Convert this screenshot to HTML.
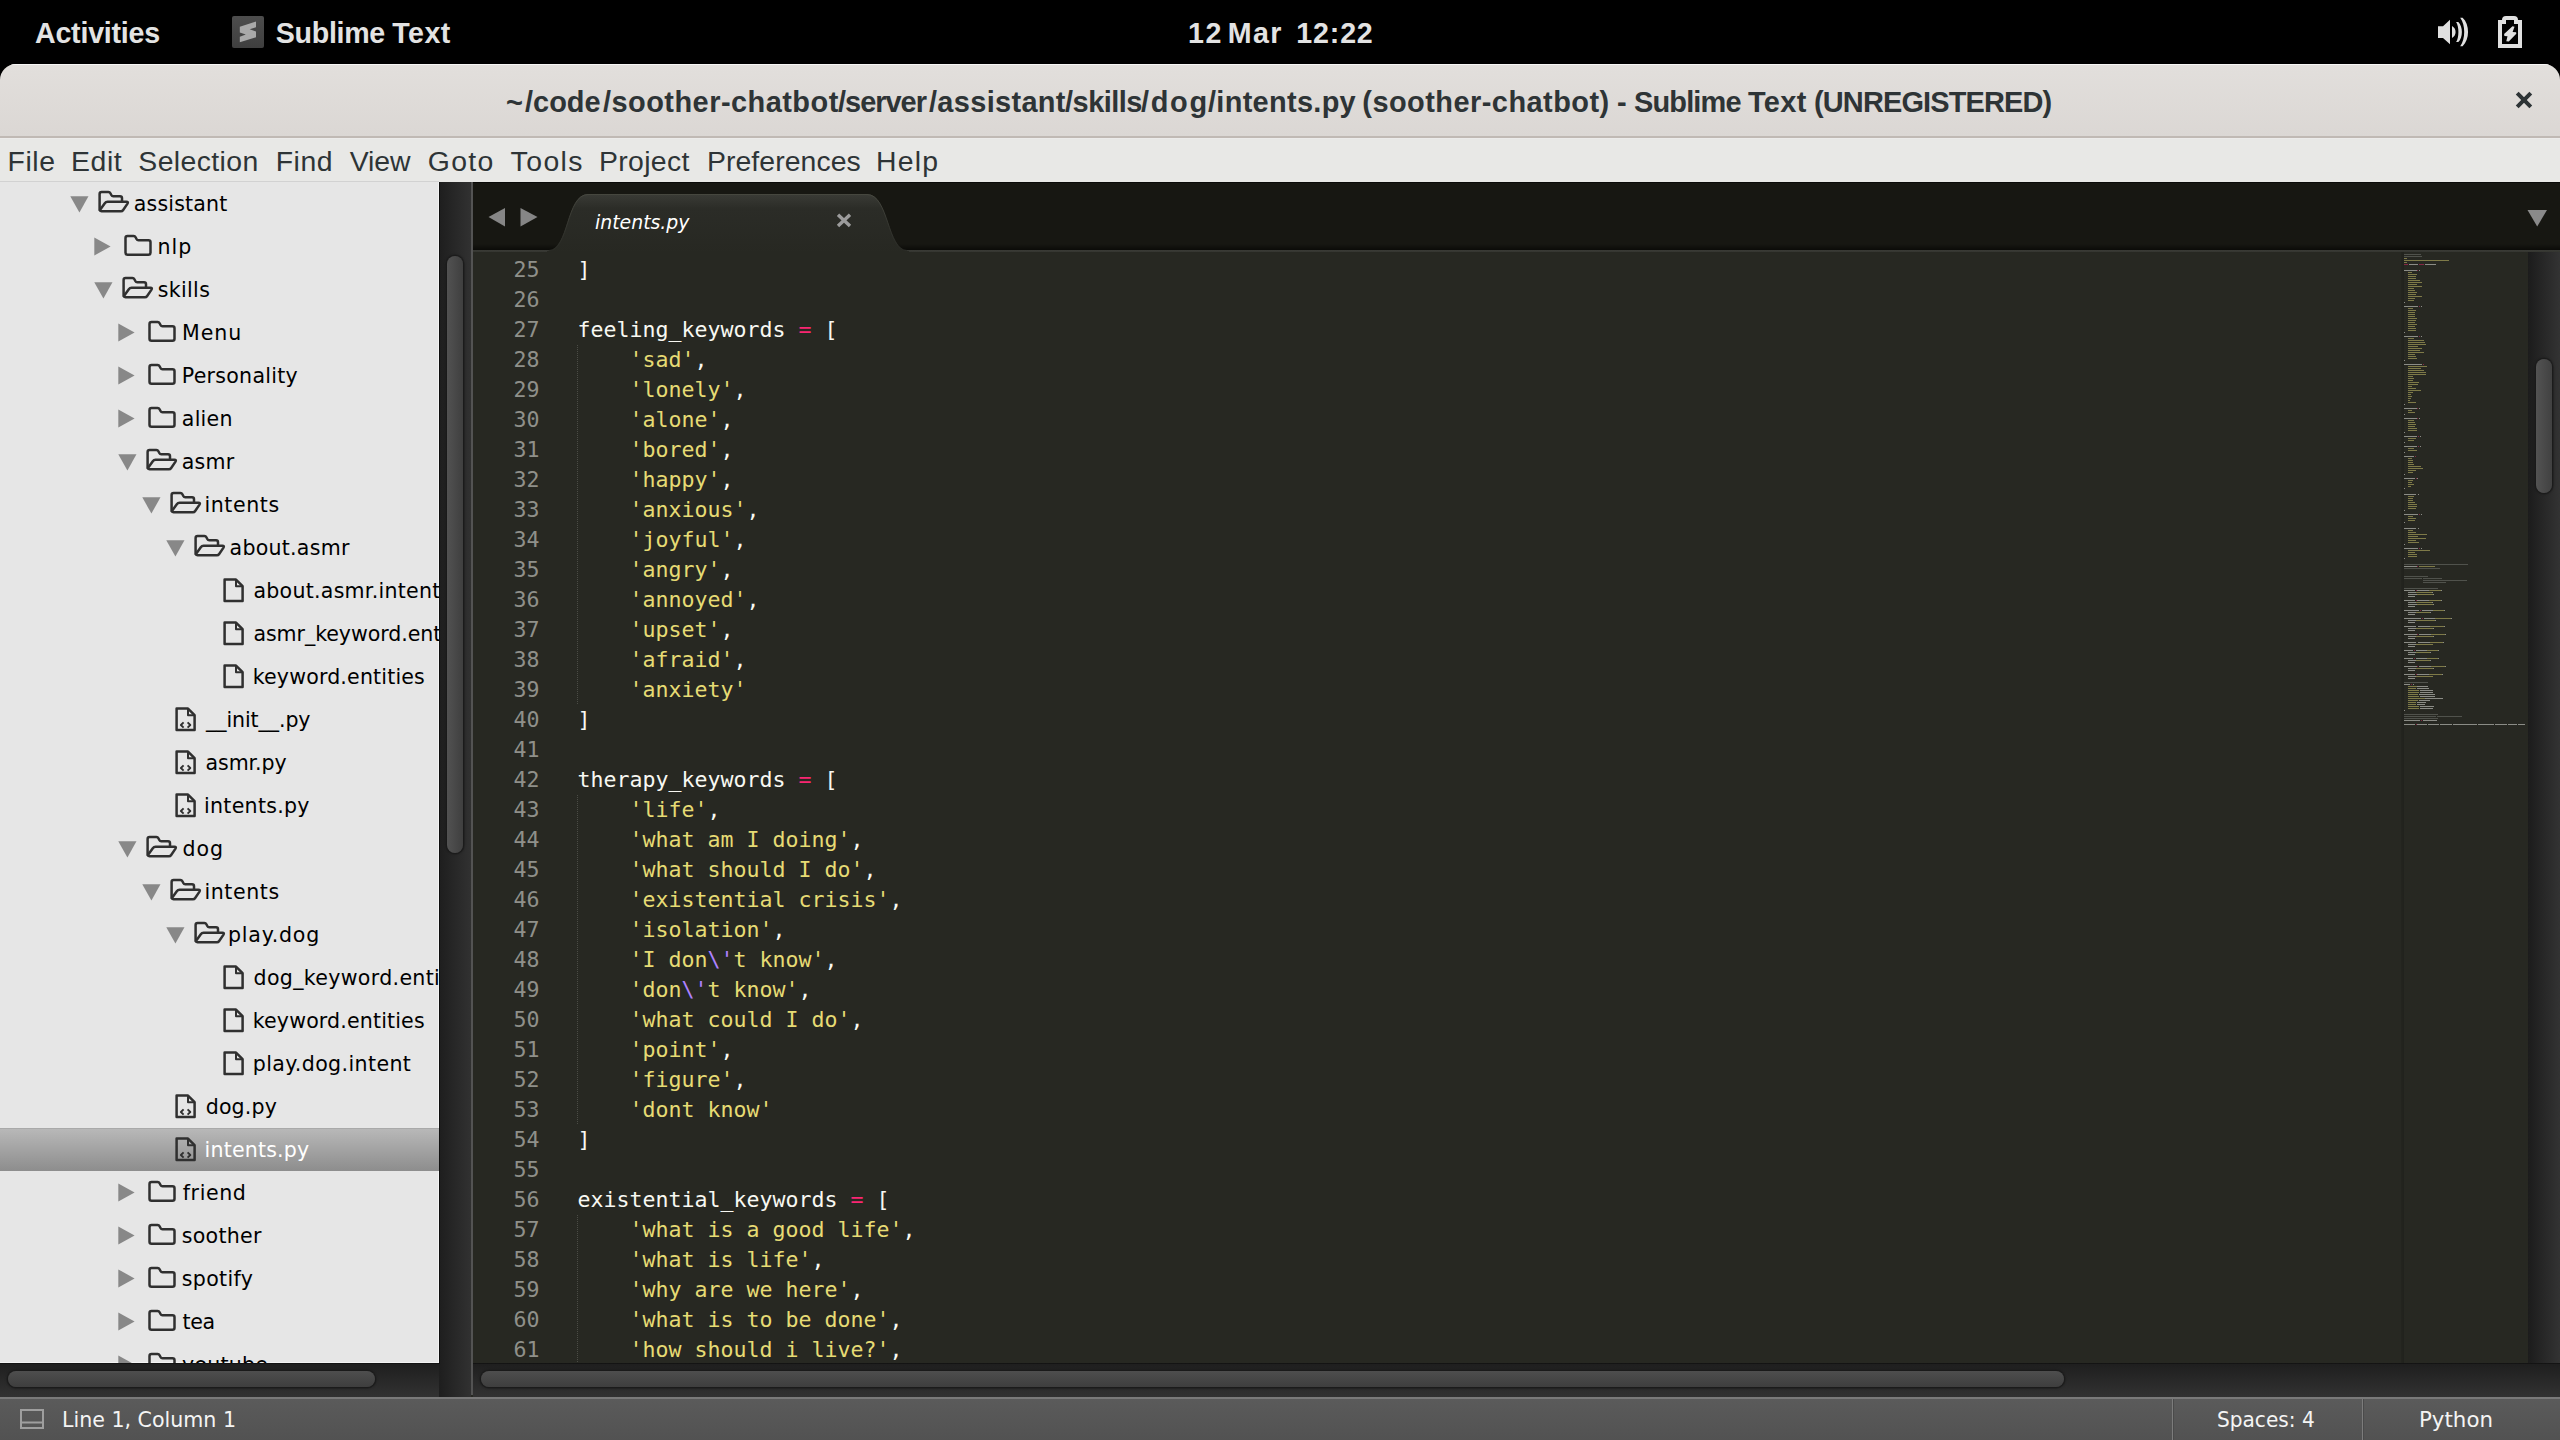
<!DOCTYPE html>
<html lang="en"><head><meta charset="utf-8"><title>intents.py - Sublime Text</title>
<style>
*{margin:0;padding:0;box-sizing:border-box}
html,body{width:2560px;height:1440px;overflow:hidden;background:#000}
body{position:relative;font-family:"Liberation Sans",sans-serif}
.abs{position:absolute}
.t{position:absolute;white-space:pre;line-height:1}
#topbar{position:absolute;left:0;top:0;width:2560px;height:64px;background:#000;color:#e3e3e3;font-weight:bold}
#win{position:absolute;left:0;top:64px;width:2560px;height:1376px;border-radius:16px 16px 0 0;overflow:hidden;background:#272822}
#titlebar{position:absolute;left:0;top:0;width:2560px;height:72px;background:linear-gradient(#e2dfdc,#dbd7d4);box-shadow:inset 0 1px 0 #f7f6f5}
#tbborder{position:absolute;left:0;top:72px;width:2560px;height:2px;background:#c0b9b4}
#menubar{position:absolute;left:0;top:74px;width:2560px;height:44px;background:#e8e8e6;color:#2e3436;box-shadow:inset 0 1px 0 #ecebea}
#menubar .t{font-size:28.4px;top:8.7px}
#sidebar{position:absolute;left:0;top:118px;width:439px;height:1181px;background:#e6e6e6;overflow:hidden;box-shadow:inset -1px -1px 0 #f3f3f3;font-family:"DejaVu Sans",sans-serif;font-size:20.55px;color:#000}
#sbtop{position:absolute;left:0;top:117px;width:439px;height:1px;background:#d2d2d2}
.row{position:absolute;left:0;width:439px;height:43px;line-height:43px;white-space:pre}
.row.sel{background:linear-gradient(#b9b9b9,#8d8d8d);color:#fff;box-shadow:inset 0 1px 0 #a9a9a9}
.row span{position:absolute;top:0.8px}
.row svg{position:absolute}
#vtrack1{position:absolute;left:439px;top:118px;width:32px;height:1215px;background:linear-gradient(90deg,#1e1e1e,#313131)}
#vdark{position:absolute;left:439px;top:118px;width:1px;height:1182px;background:#0f0f0f}
#vsep{position:absolute;left:471px;top:118px;width:2px;height:1213px;background:#535353}
.thumb{position:absolute;border-radius:9px;box-shadow:0 0 1.5px 1.5px #1a1a1a}
#tabbar{position:absolute;left:473px;top:118px;width:2087px;height:68px;background:linear-gradient(#0a0a08 0,#0a0a08 1px,#171712 1.5px,#171712 62px,#0c0c09 67.5px)}
#tabline{position:absolute;left:0;top:68px;width:2087px;height:2.5px;background:linear-gradient(#3a3b36,#31322d)}
#editor{position:absolute;left:473px;top:188px;width:2055px;height:1111px;background:#272822;overflow:hidden}
#code{position:absolute;left:0;top:3px;font-family:"DejaVu Sans Mono",monospace;font-size:21.593px;line-height:30px;color:#f8f8f2;white-space:pre}
.ln{position:absolute;left:0;width:66.5px;text-align:right;color:#8f908a;height:30px}
.cl{position:absolute;left:104.6px;height:30px}
.s{color:#e6db74}.o{color:#f92672}.e{color:#ae81ff}
.guide{position:absolute;left:104px;width:1px;background:repeating-linear-gradient(#4b4c46 0 1px,transparent 1px 2px)}
#vtrack2{position:absolute;left:2528px;top:188px;width:32px;height:1111px;background:linear-gradient(90deg,#1c1c1c,#333)}
.hbar{position:absolute;top:1299px;height:34px;background:linear-gradient(#0e0e0e 0,#1f1f1f 1.5px,#323232)}
#status{position:absolute;left:0;top:1333px;width:2560px;height:43px;background:linear-gradient(#5b5b5b,#525252);box-shadow:inset 0 2px 0 #7a7a7a;font-family:"DejaVu Sans",sans-serif;color:#f4f4f4}
#status .t{font-size:21.9px;top:12px;transform:scaleX(0.94);transform-origin:0 0}
.vs{position:absolute;top:2px;width:2px;height:41px;background:linear-gradient(90deg,#7c7c7c 0 1px,#4a4a4a 1px 2px)}
</style></head><body>

<div id="topbar">
<div class="t" style="left:35.00px;top:18.8px;letter-spacing:-0.222px;font-size:28.6px">Activities</div>
<svg class="abs" style="left:232px;top:16px" width="32" height="32" viewBox="0 0 32 32"><defs><linearGradient id="ig" x1="0" y1="0" x2="0" y2="1"><stop offset="0" stop-color="#4d4d4d"/><stop offset="1" stop-color="#3f3f3f"/></linearGradient></defs><rect width="32" height="32" rx="2" fill="url(#ig)"/><polygon points="24,5.5 7.8,10.7 7.8,16.5 13.8,18.5 7.8,20.7 7.8,26.3 24,21.3 24,15.5 17.7,13.3 24,11.2" fill="#a9a9a9"/></svg>
<div class="t" style="left:275.75px;top:18.8px;letter-spacing:-0.283px;font-size:28.6px">Sublime</div>
<div class="t" style="left:392.15px;top:18.8px;letter-spacing:0.500px;font-size:28.6px">Text</div>
<div class="t" style="left:1187.90px;top:18.8px;letter-spacing:1.800px;font-size:28.6px">12</div>
<div class="t" style="left:1227.75px;top:18.8px;letter-spacing:1.450px;font-size:28.6px">Mar</div>
<div class="t" style="left:1296.35px;top:18.8px;letter-spacing:0.825px;font-size:28.6px">12:22</div>
<svg class="abs" style="left:2432px;top:12px" width="40" height="40" viewBox="0 0 40 40" fill="#e0e0e0"><path d="M6,14.3 H11 L18,7.8 V32.2 L11,26 H6 Z"/><path d="M20,14 C24.8,16.5 24.8,23.5 20,26 Z"/><path d="M24.1,9.9 L26.3,9.9 C31.1,14.5 31.1,25.5 26.3,30 L24.1,30 C27.2,25.5 27.2,14.5 24.1,9.9 Z"/><path d="M28.2,5.8 L30.6,5.8 C37.9,12.5 37.9,27.5 30.6,34.2 L28.2,34.2 C33.6,27 33.6,13 28.2,5.8 Z"/></svg>
<svg class="abs" style="left:2494px;top:12px" width="32" height="40" viewBox="0 0 32 40"><path d="M6,34 V10 H10 V8 Q10,6 12,6 H20 Q22,6 22,8 V10 H26 V34 Z" fill="none" stroke="#e0e0e0" stroke-width="4" stroke-linejoin="miter"/><polygon points="18.5,14.2 20.5,14.8 18.6,19.9 22.1,20.2 22.3,21.8 14.8,29.6 12.3,29.3 13.5,24.3 10.4,24 10.1,22.1" fill="#e0e0e0"/></svg>
</div>
<div id="win">
<div id="titlebar">
<div class="t" style="left:506.00px;top:24.3px;letter-spacing:0.000px;font-size:28.94px;font-weight:bold;color:#2e3436">~</div>
<div class="t" style="left:525.00px;top:24.3px;letter-spacing:0.000px;font-size:28.94px;font-weight:bold;color:#2e3436">/code</div>
<div class="t" style="left:603.00px;top:24.3px;letter-spacing:0.467px;font-size:28.94px;font-weight:bold;color:#2e3436">/soother-chatbot</div>
<div class="t" style="left:838.00px;top:24.3px;letter-spacing:-1.000px;font-size:28.94px;font-weight:bold;color:#2e3436">/server</div>
<div class="t" style="left:929.00px;top:24.3px;letter-spacing:0.333px;font-size:28.94px;font-weight:bold;color:#2e3436">/assistant</div>
<div class="t" style="left:1065.00px;top:24.3px;letter-spacing:-0.500px;font-size:28.94px;font-weight:bold;color:#2e3436">/skills</div>
<div class="t" style="left:1141.00px;top:24.3px;letter-spacing:1.667px;font-size:28.94px;font-weight:bold;color:#2e3436">/dog</div>
<div class="t" style="left:1208.00px;top:24.3px;letter-spacing:0.300px;font-size:28.94px;font-weight:bold;color:#2e3436">/intents.py</div>
<div class="t" style="left:1362.30px;top:24.3px;letter-spacing:0.463px;font-size:28.94px;font-weight:bold;color:#2e3436">(soother-chatbot)</div>
<div class="t" style="left:1617.00px;top:24.3px;letter-spacing:0.000px;font-size:28.94px;font-weight:bold;color:#2e3436">-</div>
<div class="t" style="left:1634.00px;top:24.3px;letter-spacing:-0.833px;font-size:28.94px;font-weight:bold;color:#2e3436">Sublime</div>
<div class="t" style="left:1748.00px;top:24.3px;letter-spacing:0.333px;font-size:28.94px;font-weight:bold;color:#2e3436">Text</div>
<div class="t" style="left:1814.00px;top:24.3px;letter-spacing:-0.846px;font-size:28.94px;font-weight:bold;color:#2e3436">(UNREGISTERED)</div>
<svg class="abs" style="left:2514px;top:26px" width="20" height="20" viewBox="0 0 20 20"><path d="M3.2,3.2 L16.8,16.8 M16.8,3.2 L3.2,16.8" stroke="#2e3436" stroke-width="4" stroke-linecap="butt"/></svg>
</div><div id="tbborder"></div>
<div id="menubar">
<div class="t" style="left:7.40px;top:8.7px;letter-spacing:0.667px;">File</div>
<div class="t" style="left:71.00px;top:8.7px;letter-spacing:0.600px;">Edit</div>
<div class="t" style="left:138.30px;top:8.7px;letter-spacing:0.400px;">Selection</div>
<div class="t" style="left:275.75px;top:8.7px;letter-spacing:0.500px;">Find</div>
<div class="t" style="left:349.65px;top:8.7px;letter-spacing:-0.033px;">View</div>
<div class="t" style="left:427.85px;top:8.7px;letter-spacing:1.300px;">Goto</div>
<div class="t" style="left:510.55px;top:8.7px;letter-spacing:1.425px;">Tools</div>
<div class="t" style="left:599.00px;top:8.7px;letter-spacing:0.333px;">Project</div>
<div class="t" style="left:706.90px;top:8.7px;letter-spacing:0.080px;">Preferences</div>
<div class="t" style="left:876.00px;top:8.7px;letter-spacing:1.200px;">Help</div>
</div>
<div id="sbtop"></div><div id="sidebar">
<div class="row" style="top:0px">
<svg style="left:69.5px;top:13.5px" width="19" height="17" viewBox="0 0 19 17"><polygon points="0.3,0.3 18.5,0.3 9.4,16.6" fill="#888"/></svg>
<svg style="left:98px;top:8px" width="34" height="26" viewBox="0 0 34 26" fill="none" stroke="#303030" stroke-width="2.5" stroke-linejoin="round" stroke-linecap="round"><path d="M1.6,20 V4 Q1.6,2 3.6,2 H10.4 Q11.8,2 12.4,3.2 L13.3,5 Q13.9,6.2 15.3,6.2 H22 Q24,6.2 24,8.2 V11.8"/><path d="M9.6,11.8 H28.4 Q30.6,11.8 29.5,13.6 L25,20.2 Q24.3,21.2 23,21.2 H3.6 Q1.2,21.2 2.5,19.2 L6.8,13.2 Q7.8,11.8 9.6,11.8 Z"/></svg>
<span style="left:133.80px;letter-spacing:0.175px">assistant</span></div>
<div class="row" style="top:43px">
<svg style="left:93.7px;top:12px" width="17" height="19" viewBox="0 0 17 19"><polygon points="0.3,0.4 16.6,9.5 0.3,18.6" fill="#888"/></svg>
<svg style="left:124px;top:9px" width="30" height="24" viewBox="0 0 30 24" fill="none" stroke="#303030" stroke-width="2.5" stroke-linejoin="round"><path d="M1.5,4 Q1.5,2 3.5,2 H9.6 Q11,2 11.6,3.2 L12.5,5 Q13.1,6.2 14.5,6.2 H24.5 Q26.5,6.2 26.5,8.2 V18.8 Q26.5,20.8 24.5,20.8 H3.5 Q1.5,20.8 1.5,18.8 Z"/></svg>
<span style="left:157.50px;letter-spacing:1.000px">nlp</span></div>
<div class="row" style="top:86px">
<svg style="left:93.5px;top:13.5px" width="19" height="17" viewBox="0 0 19 17"><polygon points="0.3,0.3 18.5,0.3 9.4,16.6" fill="#888"/></svg>
<svg style="left:122px;top:8px" width="34" height="26" viewBox="0 0 34 26" fill="none" stroke="#303030" stroke-width="2.5" stroke-linejoin="round" stroke-linecap="round"><path d="M1.6,20 V4 Q1.6,2 3.6,2 H10.4 Q11.8,2 12.4,3.2 L13.3,5 Q13.9,6.2 15.3,6.2 H22 Q24,6.2 24,8.2 V11.8"/><path d="M9.6,11.8 H28.4 Q30.6,11.8 29.5,13.6 L25,20.2 Q24.3,21.2 23,21.2 H3.6 Q1.2,21.2 2.5,19.2 L6.8,13.2 Q7.8,11.8 9.6,11.8 Z"/></svg>
<span style="left:157.80px;letter-spacing:0.320px">skills</span></div>
<div class="row" style="top:129px">
<svg style="left:117.7px;top:12px" width="17" height="19" viewBox="0 0 17 19"><polygon points="0.3,0.4 16.6,9.5 0.3,18.6" fill="#888"/></svg>
<svg style="left:148px;top:9px" width="30" height="24" viewBox="0 0 30 24" fill="none" stroke="#303030" stroke-width="2.5" stroke-linejoin="round"><path d="M1.5,4 Q1.5,2 3.5,2 H9.6 Q11,2 11.6,3.2 L12.5,5 Q13.1,6.2 14.5,6.2 H24.5 Q26.5,6.2 26.5,8.2 V18.8 Q26.5,20.8 24.5,20.8 H3.5 Q1.5,20.8 1.5,18.8 Z"/></svg>
<span style="left:181.95px;letter-spacing:1.000px">Menu</span></div>
<div class="row" style="top:172px">
<svg style="left:117.7px;top:12px" width="17" height="19" viewBox="0 0 17 19"><polygon points="0.3,0.4 16.6,9.5 0.3,18.6" fill="#888"/></svg>
<svg style="left:148px;top:9px" width="30" height="24" viewBox="0 0 30 24" fill="none" stroke="#303030" stroke-width="2.5" stroke-linejoin="round"><path d="M1.5,4 Q1.5,2 3.5,2 H9.6 Q11,2 11.6,3.2 L12.5,5 Q13.1,6.2 14.5,6.2 H24.5 Q26.5,6.2 26.5,8.2 V18.8 Q26.5,20.8 24.5,20.8 H3.5 Q1.5,20.8 1.5,18.8 Z"/></svg>
<span style="left:181.75px;letter-spacing:0.270px">Personality</span></div>
<div class="row" style="top:215px">
<svg style="left:117.7px;top:12px" width="17" height="19" viewBox="0 0 17 19"><polygon points="0.3,0.4 16.6,9.5 0.3,18.6" fill="#888"/></svg>
<svg style="left:148px;top:9px" width="30" height="24" viewBox="0 0 30 24" fill="none" stroke="#303030" stroke-width="2.5" stroke-linejoin="round"><path d="M1.5,4 Q1.5,2 3.5,2 H9.6 Q11,2 11.6,3.2 L12.5,5 Q13.1,6.2 14.5,6.2 H24.5 Q26.5,6.2 26.5,8.2 V18.8 Q26.5,20.8 24.5,20.8 H3.5 Q1.5,20.8 1.5,18.8 Z"/></svg>
<span style="left:181.80px;letter-spacing:0.250px">alien</span></div>
<div class="row" style="top:258px">
<svg style="left:117.5px;top:13.5px" width="19" height="17" viewBox="0 0 19 17"><polygon points="0.3,0.3 18.5,0.3 9.4,16.6" fill="#888"/></svg>
<svg style="left:146px;top:8px" width="34" height="26" viewBox="0 0 34 26" fill="none" stroke="#303030" stroke-width="2.5" stroke-linejoin="round" stroke-linecap="round"><path d="M1.6,20 V4 Q1.6,2 3.6,2 H10.4 Q11.8,2 12.4,3.2 L13.3,5 Q13.9,6.2 15.3,6.2 H22 Q24,6.2 24,8.2 V11.8"/><path d="M9.6,11.8 H28.4 Q30.6,11.8 29.5,13.6 L25,20.2 Q24.3,21.2 23,21.2 H3.6 Q1.2,21.2 2.5,19.2 L6.8,13.2 Q7.8,11.8 9.6,11.8 Z"/></svg>
<span style="left:181.70px;letter-spacing:0.267px">asmr</span></div>
<div class="row" style="top:301px">
<svg style="left:141.5px;top:13.5px" width="19" height="17" viewBox="0 0 19 17"><polygon points="0.3,0.3 18.5,0.3 9.4,16.6" fill="#888"/></svg>
<svg style="left:170px;top:8px" width="34" height="26" viewBox="0 0 34 26" fill="none" stroke="#303030" stroke-width="2.5" stroke-linejoin="round" stroke-linecap="round"><path d="M1.6,20 V4 Q1.6,2 3.6,2 H10.4 Q11.8,2 12.4,3.2 L13.3,5 Q13.9,6.2 15.3,6.2 H22 Q24,6.2 24,8.2 V11.8"/><path d="M9.6,11.8 H28.4 Q30.6,11.8 29.5,13.6 L25,20.2 Q24.3,21.2 23,21.2 H3.6 Q1.2,21.2 2.5,19.2 L6.8,13.2 Q7.8,11.8 9.6,11.8 Z"/></svg>
<span style="left:204.45px;letter-spacing:0.583px">intents</span></div>
<div class="row" style="top:344px">
<svg style="left:165.5px;top:13.5px" width="19" height="17" viewBox="0 0 19 17"><polygon points="0.3,0.3 18.5,0.3 9.4,16.6" fill="#888"/></svg>
<svg style="left:194px;top:8px" width="34" height="26" viewBox="0 0 34 26" fill="none" stroke="#303030" stroke-width="2.5" stroke-linejoin="round" stroke-linecap="round"><path d="M1.6,20 V4 Q1.6,2 3.6,2 H10.4 Q11.8,2 12.4,3.2 L13.3,5 Q13.9,6.2 15.3,6.2 H22 Q24,6.2 24,8.2 V11.8"/><path d="M9.6,11.8 H28.4 Q30.6,11.8 29.5,13.6 L25,20.2 Q24.3,21.2 23,21.2 H3.6 Q1.2,21.2 2.5,19.2 L6.8,13.2 Q7.8,11.8 9.6,11.8 Z"/></svg>
<span style="left:229.60px;letter-spacing:0.244px">about.asmr</span></div>
<div class="row" style="top:387px">
<svg style="left:223.0px;top:9px" width="24" height="26" viewBox="0 0 24 26" fill="none" stroke="#303030" stroke-width="2.5" stroke-linejoin="round"><path d="M1.6,1.6 H13 L19.6,8.2 V23 H1.6 Z"/><path d="M13,1.6 V8.2 H19.6" stroke-width="2"/></svg>
<span style="left:253.45px;letter-spacing:0.256px">about.asmr.intent</span></div>
<div class="row" style="top:430px">
<svg style="left:223.0px;top:9px" width="24" height="26" viewBox="0 0 24 26" fill="none" stroke="#303030" stroke-width="2.5" stroke-linejoin="round"><path d="M1.6,1.6 H13 L19.6,8.2 V23 H1.6 Z"/><path d="M13,1.6 V8.2 H19.6" stroke-width="2"/></svg>
<span style="left:253.45px;letter-spacing:-0.060px">asmr_keyword.entities</span></div>
<div class="row" style="top:473px">
<svg style="left:223.0px;top:9px" width="24" height="26" viewBox="0 0 24 26" fill="none" stroke="#303030" stroke-width="2.5" stroke-linejoin="round"><path d="M1.6,1.6 H13 L19.6,8.2 V23 H1.6 Z"/><path d="M13,1.6 V8.2 H19.6" stroke-width="2"/></svg>
<span style="left:252.70px;letter-spacing:0.173px">keyword.entities</span></div>
<div class="row" style="top:516px">
<svg style="left:175.0px;top:9px" width="24" height="26" viewBox="0 0 24 26" fill="none" stroke="#303030" stroke-width="2.5" stroke-linejoin="round"><path d="M1.6,1.6 H13 L19.6,8.2 V23 H1.6 Z"/><path d="M13,1.6 V8.2 H19.6" stroke-width="2"/><path d="M8.6,15.4 L5.9,18 L8.6,20.6 M12.6,15.4 L15.3,18 L12.6,20.6" stroke-width="1.9"/></svg>
<span style="left:206.00px;letter-spacing:-0.080px">__init__.py</span></div>
<div class="row" style="top:559px">
<svg style="left:175.0px;top:9px" width="24" height="26" viewBox="0 0 24 26" fill="none" stroke="#303030" stroke-width="2.5" stroke-linejoin="round"><path d="M1.6,1.6 H13 L19.6,8.2 V23 H1.6 Z"/><path d="M13,1.6 V8.2 H19.6" stroke-width="2"/><path d="M8.6,15.4 L5.9,18 L8.6,20.6 M12.6,15.4 L15.3,18 L12.6,20.6" stroke-width="1.9"/></svg>
<span style="left:205.60px;letter-spacing:-0.100px">asmr.py</span></div>
<div class="row" style="top:602px">
<svg style="left:175.0px;top:9px" width="24" height="26" viewBox="0 0 24 26" fill="none" stroke="#303030" stroke-width="2.5" stroke-linejoin="round"><path d="M1.6,1.6 H13 L19.6,8.2 V23 H1.6 Z"/><path d="M13,1.6 V8.2 H19.6" stroke-width="2"/><path d="M8.6,15.4 L5.9,18 L8.6,20.6 M12.6,15.4 L15.3,18 L12.6,20.6" stroke-width="1.9"/></svg>
<span style="left:204.10px;letter-spacing:0.267px">intents.py</span></div>
<div class="row" style="top:645px">
<svg style="left:117.5px;top:13.5px" width="19" height="17" viewBox="0 0 19 17"><polygon points="0.3,0.3 18.5,0.3 9.4,16.6" fill="#888"/></svg>
<svg style="left:146px;top:8px" width="34" height="26" viewBox="0 0 34 26" fill="none" stroke="#303030" stroke-width="2.5" stroke-linejoin="round" stroke-linecap="round"><path d="M1.6,20 V4 Q1.6,2 3.6,2 H10.4 Q11.8,2 12.4,3.2 L13.3,5 Q13.9,6.2 15.3,6.2 H22 Q24,6.2 24,8.2 V11.8"/><path d="M9.6,11.8 H28.4 Q30.6,11.8 29.5,13.6 L25,20.2 Q24.3,21.2 23,21.2 H3.6 Q1.2,21.2 2.5,19.2 L6.8,13.2 Q7.8,11.8 9.6,11.8 Z"/></svg>
<span style="left:182.45px;letter-spacing:1.000px">dog</span></div>
<div class="row" style="top:688px">
<svg style="left:141.5px;top:13.5px" width="19" height="17" viewBox="0 0 19 17"><polygon points="0.3,0.3 18.5,0.3 9.4,16.6" fill="#888"/></svg>
<svg style="left:170px;top:8px" width="34" height="26" viewBox="0 0 34 26" fill="none" stroke="#303030" stroke-width="2.5" stroke-linejoin="round" stroke-linecap="round"><path d="M1.6,20 V4 Q1.6,2 3.6,2 H10.4 Q11.8,2 12.4,3.2 L13.3,5 Q13.9,6.2 15.3,6.2 H22 Q24,6.2 24,8.2 V11.8"/><path d="M9.6,11.8 H28.4 Q30.6,11.8 29.5,13.6 L25,20.2 Q24.3,21.2 23,21.2 H3.6 Q1.2,21.2 2.5,19.2 L6.8,13.2 Q7.8,11.8 9.6,11.8 Z"/></svg>
<span style="left:204.40px;letter-spacing:0.600px">intents</span></div>
<div class="row" style="top:731px">
<svg style="left:165.5px;top:13.5px" width="19" height="17" viewBox="0 0 19 17"><polygon points="0.3,0.3 18.5,0.3 9.4,16.6" fill="#888"/></svg>
<svg style="left:194px;top:8px" width="34" height="26" viewBox="0 0 34 26" fill="none" stroke="#303030" stroke-width="2.5" stroke-linejoin="round" stroke-linecap="round"><path d="M1.6,20 V4 Q1.6,2 3.6,2 H10.4 Q11.8,2 12.4,3.2 L13.3,5 Q13.9,6.2 15.3,6.2 H22 Q24,6.2 24,8.2 V11.8"/><path d="M9.6,11.8 H28.4 Q30.6,11.8 29.5,13.6 L25,20.2 Q24.3,21.2 23,21.2 H3.6 Q1.2,21.2 2.5,19.2 L6.8,13.2 Q7.8,11.8 9.6,11.8 Z"/></svg>
<span style="left:227.95px;letter-spacing:0.786px">play.dog</span></div>
<div class="row" style="top:774px">
<svg style="left:223.0px;top:9px" width="24" height="26" viewBox="0 0 24 26" fill="none" stroke="#303030" stroke-width="2.5" stroke-linejoin="round"><path d="M1.6,1.6 H13 L19.6,8.2 V23 H1.6 Z"/><path d="M13,1.6 V8.2 H19.6" stroke-width="2"/></svg>
<span style="left:253.55px;letter-spacing:0.327px">dog_keyword.entities</span></div>
<div class="row" style="top:817px">
<svg style="left:223.0px;top:9px" width="24" height="26" viewBox="0 0 24 26" fill="none" stroke="#303030" stroke-width="2.5" stroke-linejoin="round"><path d="M1.6,1.6 H13 L19.6,8.2 V23 H1.6 Z"/><path d="M13,1.6 V8.2 H19.6" stroke-width="2"/></svg>
<span style="left:252.75px;letter-spacing:0.153px">keyword.entities</span></div>
<div class="row" style="top:860px">
<svg style="left:223.0px;top:9px" width="24" height="26" viewBox="0 0 24 26" fill="none" stroke="#303030" stroke-width="2.5" stroke-linejoin="round"><path d="M1.6,1.6 H13 L19.6,8.2 V23 H1.6 Z"/><path d="M13,1.6 V8.2 H19.6" stroke-width="2"/></svg>
<span style="left:252.75px;letter-spacing:0.379px">play.dog.intent</span></div>
<div class="row" style="top:903px">
<svg style="left:175.0px;top:9px" width="24" height="26" viewBox="0 0 24 26" fill="none" stroke="#303030" stroke-width="2.5" stroke-linejoin="round"><path d="M1.6,1.6 H13 L19.6,8.2 V23 H1.6 Z"/><path d="M13,1.6 V8.2 H19.6" stroke-width="2"/><path d="M8.6,15.4 L5.9,18 L8.6,20.6 M12.6,15.4 L15.3,18 L12.6,20.6" stroke-width="1.9"/></svg>
<span style="left:205.70px;letter-spacing:0.160px">dog.py</span></div>
<div class="row sel" style="top:946px">
<svg style="left:175.0px;top:9px" width="24" height="26" viewBox="0 0 24 26" fill="none" stroke="#303030" stroke-width="2.5" stroke-linejoin="round"><path d="M1.6,1.6 H13 L19.6,8.2 V23 H1.6 Z"/><path d="M13,1.6 V8.2 H19.6" stroke-width="2"/><path d="M8.6,15.4 L5.9,18 L8.6,20.6 M12.6,15.4 L15.3,18 L12.6,20.6" stroke-width="1.9"/></svg>
<span style="left:204.60px;letter-spacing:0.178px">intents.py</span></div>
<div class="row" style="top:989px">
<svg style="left:117.7px;top:12px" width="17" height="19" viewBox="0 0 17 19"><polygon points="0.3,0.4 16.6,9.5 0.3,18.6" fill="#888"/></svg>
<svg style="left:148px;top:9px" width="30" height="24" viewBox="0 0 30 24" fill="none" stroke="#303030" stroke-width="2.5" stroke-linejoin="round"><path d="M1.5,4 Q1.5,2 3.5,2 H9.6 Q11,2 11.6,3.2 L12.5,5 Q13.1,6.2 14.5,6.2 H24.5 Q26.5,6.2 26.5,8.2 V18.8 Q26.5,20.8 24.5,20.8 H3.5 Q1.5,20.8 1.5,18.8 Z"/></svg>
<span style="left:182.78px;letter-spacing:0.590px">friend</span></div>
<div class="row" style="top:1032px">
<svg style="left:117.7px;top:12px" width="17" height="19" viewBox="0 0 17 19"><polygon points="0.3,0.4 16.6,9.5 0.3,18.6" fill="#888"/></svg>
<svg style="left:148px;top:9px" width="30" height="24" viewBox="0 0 30 24" fill="none" stroke="#303030" stroke-width="2.5" stroke-linejoin="round"><path d="M1.5,4 Q1.5,2 3.5,2 H9.6 Q11,2 11.6,3.2 L12.5,5 Q13.1,6.2 14.5,6.2 H24.5 Q26.5,6.2 26.5,8.2 V18.8 Q26.5,20.8 24.5,20.8 H3.5 Q1.5,20.8 1.5,18.8 Z"/></svg>
<span style="left:181.70px;letter-spacing:0.300px">soother</span></div>
<div class="row" style="top:1075px">
<svg style="left:117.7px;top:12px" width="17" height="19" viewBox="0 0 17 19"><polygon points="0.3,0.4 16.6,9.5 0.3,18.6" fill="#888"/></svg>
<svg style="left:148px;top:9px" width="30" height="24" viewBox="0 0 30 24" fill="none" stroke="#303030" stroke-width="2.5" stroke-linejoin="round"><path d="M1.5,4 Q1.5,2 3.5,2 H9.6 Q11,2 11.6,3.2 L12.5,5 Q13.1,6.2 14.5,6.2 H24.5 Q26.5,6.2 26.5,8.2 V18.8 Q26.5,20.8 24.5,20.8 H3.5 Q1.5,20.8 1.5,18.8 Z"/></svg>
<span style="left:181.78px;letter-spacing:0.325px">spotify</span></div>
<div class="row" style="top:1118px">
<svg style="left:117.7px;top:12px" width="17" height="19" viewBox="0 0 17 19"><polygon points="0.3,0.4 16.6,9.5 0.3,18.6" fill="#888"/></svg>
<svg style="left:148px;top:9px" width="30" height="24" viewBox="0 0 30 24" fill="none" stroke="#303030" stroke-width="2.5" stroke-linejoin="round"><path d="M1.5,4 Q1.5,2 3.5,2 H9.6 Q11,2 11.6,3.2 L12.5,5 Q13.1,6.2 14.5,6.2 H24.5 Q26.5,6.2 26.5,8.2 V18.8 Q26.5,20.8 24.5,20.8 H3.5 Q1.5,20.8 1.5,18.8 Z"/></svg>
<span style="left:182.50px;letter-spacing:-0.300px">tea</span></div>
<div class="row" style="top:1161px">
<svg style="left:117.7px;top:12px" width="17" height="19" viewBox="0 0 17 19"><polygon points="0.3,0.4 16.6,9.5 0.3,18.6" fill="#888"/></svg>
<svg style="left:148px;top:9px" width="30" height="24" viewBox="0 0 30 24" fill="none" stroke="#303030" stroke-width="2.5" stroke-linejoin="round"><path d="M1.5,4 Q1.5,2 3.5,2 H9.6 Q11,2 11.6,3.2 L12.5,5 Q13.1,6.2 14.5,6.2 H24.5 Q26.5,6.2 26.5,8.2 V18.8 Q26.5,20.8 24.5,20.8 H3.5 Q1.5,20.8 1.5,18.8 Z"/></svg>
<span style="left:182.00px;letter-spacing:0.233px">youtube</span></div>
</div>
<div id="vtrack1"><div class="thumb" style="left:7.8px;top:74px;width:16px;height:597px;background:linear-gradient(90deg,#525252,#3f3f3f)"></div></div><div id="vdark"></div><div id="vsep"></div>
<div id="tabbar"><div id="tabline"></div>
<svg class="abs" style="left:0;top:0" width="2087" height="72" viewBox="473 182 2087 72"><defs><linearGradient id="tg" x1="0" y1="0" x2="0" y2="1"><stop offset="0" stop-color="#3a3b36"/><stop offset="0.25" stop-color="#2b2c27"/><stop offset="1" stop-color="#272822"/></linearGradient></defs><linearGradient id="ts" gradientUnits="userSpaceOnUse" x1="0" y1="194" x2="0" y2="251"><stop offset="0" stop-color="#46473f"/><stop offset="0.6" stop-color="#34352f"/><stop offset="1" stop-color="#2a2b26"/></linearGradient><polygon points="488.5,217 505,208 505,226.5" fill="#868686"/><polygon points="520.5,208 537.5,217 520.5,226.5" fill="#868686"/><path d="M547,251 C569,251 566,194 588,194 H867 C889,194 887,251 909,251 V253 H547 Z" fill="url(#tg)"/><path d="M549,250.5 C569,250.5 566,194.5 588,194.5 H867 C889,194.5 887,250.5 907,250.5" fill="none" stroke="url(#ts)" stroke-width="1"/><path d="M838,214.8 L850,226 M850,214.8 L838,226" stroke="#9c9c9c" stroke-width="3.4"/><polygon points="2527.5,210 2547,210 2537.2,226.5" fill="#8a8a8a"/></svg>
<div class="t" style="left:121.5px;top:30px;font-family:'DejaVu Sans',sans-serif;font-style:italic;font-size:20.3px;color:#fff;transform:scaleX(0.93);transform-origin:0 0">intents.py</div>
</div>
<div id="editor"><div id="code">
<div class="ln" style="top:0px">25</div>
<div class="cl" style="top:0px">]</div>
<div class="ln" style="top:30px">26</div>
<div class="ln" style="top:60px">27</div>
<div class="cl" style="top:60px">feeling_keywords <span class="o">=</span> [</div>
<div class="ln" style="top:90px">28</div>
<div class="cl" style="top:90px">    <span class="s">&#x27;sad&#x27;</span>,</div>
<div class="ln" style="top:120px">29</div>
<div class="cl" style="top:120px">    <span class="s">&#x27;lonely&#x27;</span>,</div>
<div class="ln" style="top:150px">30</div>
<div class="cl" style="top:150px">    <span class="s">&#x27;alone&#x27;</span>,</div>
<div class="ln" style="top:180px">31</div>
<div class="cl" style="top:180px">    <span class="s">&#x27;bored&#x27;</span>,</div>
<div class="ln" style="top:210px">32</div>
<div class="cl" style="top:210px">    <span class="s">&#x27;happy&#x27;</span>,</div>
<div class="ln" style="top:240px">33</div>
<div class="cl" style="top:240px">    <span class="s">&#x27;anxious&#x27;</span>,</div>
<div class="ln" style="top:270px">34</div>
<div class="cl" style="top:270px">    <span class="s">&#x27;joyful&#x27;</span>,</div>
<div class="ln" style="top:300px">35</div>
<div class="cl" style="top:300px">    <span class="s">&#x27;angry&#x27;</span>,</div>
<div class="ln" style="top:330px">36</div>
<div class="cl" style="top:330px">    <span class="s">&#x27;annoyed&#x27;</span>,</div>
<div class="ln" style="top:360px">37</div>
<div class="cl" style="top:360px">    <span class="s">&#x27;upset&#x27;</span>,</div>
<div class="ln" style="top:390px">38</div>
<div class="cl" style="top:390px">    <span class="s">&#x27;afraid&#x27;</span>,</div>
<div class="ln" style="top:420px">39</div>
<div class="cl" style="top:420px">    <span class="s">&#x27;anxiety&#x27;</span></div>
<div class="ln" style="top:450px">40</div>
<div class="cl" style="top:450px">]</div>
<div class="ln" style="top:480px">41</div>
<div class="ln" style="top:510px">42</div>
<div class="cl" style="top:510px">therapy_keywords <span class="o">=</span> [</div>
<div class="ln" style="top:540px">43</div>
<div class="cl" style="top:540px">    <span class="s">&#x27;life&#x27;</span>,</div>
<div class="ln" style="top:570px">44</div>
<div class="cl" style="top:570px">    <span class="s">&#x27;what am I doing&#x27;</span>,</div>
<div class="ln" style="top:600px">45</div>
<div class="cl" style="top:600px">    <span class="s">&#x27;what should I do&#x27;</span>,</div>
<div class="ln" style="top:630px">46</div>
<div class="cl" style="top:630px">    <span class="s">&#x27;existential crisis&#x27;</span>,</div>
<div class="ln" style="top:660px">47</div>
<div class="cl" style="top:660px">    <span class="s">&#x27;isolation&#x27;</span>,</div>
<div class="ln" style="top:690px">48</div>
<div class="cl" style="top:690px">    <span class="s">&#x27;I don<span class="e">\&#x27;</span>t know&#x27;</span>,</div>
<div class="ln" style="top:720px">49</div>
<div class="cl" style="top:720px">    <span class="s">&#x27;don<span class="e">\&#x27;</span>t know&#x27;</span>,</div>
<div class="ln" style="top:750px">50</div>
<div class="cl" style="top:750px">    <span class="s">&#x27;what could I do&#x27;</span>,</div>
<div class="ln" style="top:780px">51</div>
<div class="cl" style="top:780px">    <span class="s">&#x27;point&#x27;</span>,</div>
<div class="ln" style="top:810px">52</div>
<div class="cl" style="top:810px">    <span class="s">&#x27;figure&#x27;</span>,</div>
<div class="ln" style="top:840px">53</div>
<div class="cl" style="top:840px">    <span class="s">&#x27;dont know&#x27;</span></div>
<div class="ln" style="top:870px">54</div>
<div class="cl" style="top:870px">]</div>
<div class="ln" style="top:900px">55</div>
<div class="ln" style="top:930px">56</div>
<div class="cl" style="top:930px">existential_keywords <span class="o">=</span> [</div>
<div class="ln" style="top:960px">57</div>
<div class="cl" style="top:960px">    <span class="s">&#x27;what is a good life&#x27;</span>,</div>
<div class="ln" style="top:990px">58</div>
<div class="cl" style="top:990px">    <span class="s">&#x27;what is life&#x27;</span>,</div>
<div class="ln" style="top:1020px">59</div>
<div class="cl" style="top:1020px">    <span class="s">&#x27;why are we here&#x27;</span>,</div>
<div class="ln" style="top:1050px">60</div>
<div class="cl" style="top:1050px">    <span class="s">&#x27;what is to be done&#x27;</span>,</div>
<div class="ln" style="top:1080px">61</div>
<div class="cl" style="top:1080px">    <span class="s">&#x27;how should i live?&#x27;</span>,</div>
<div class="guide" style="top:90px;height:360px"></div>
<div class="guide" style="top:540px;height:330px"></div>
<div class="guide" style="top:960px;height:150px"></div>
</div>
<div class="abs" style="left:1928px;top:0;width:3px;height:1111px;background:linear-gradient(90deg,rgba(0,0,0,0.10),rgba(0,0,0,0.16))"></div>
<svg class="abs" style="left:1931px;top:2px" width="125" height="480" viewBox="0 0 125 480" shape-rendering="crispEdges">
<rect x="0.0" y="0" width="16.9" height="1.4" fill="#6b6c66" opacity="0.62"/>
<rect x="0.0" y="2" width="17.8" height="1.4" fill="#6b6c66" opacity="0.62"/>
<rect x="0.0" y="4" width="2.7" height="1.4" fill="#b5ad5f" opacity="0.62"/>
<rect x="0.0" y="6" width="44.5" height="1.4" fill="#b5ad5f" opacity="0.62"/>
<rect x="0.0" y="8" width="2.7" height="1.4" fill="#b5ad5f" opacity="0.62"/>
<rect x="0.0" y="10" width="3.6" height="1.4" fill="#c2265a" opacity="0.62"/>
<rect x="4.5" y="10" width="9.8" height="1.4" fill="#c9c9c3" opacity="0.62"/>
<rect x="15.1" y="10" width="5.3" height="1.4" fill="#c2265a" opacity="0.62"/>
<rect x="21.4" y="10" width="10.7" height="1.4" fill="#c9c9c3" opacity="0.62"/>
<rect x="0.0" y="16" width="12.5" height="1.4" fill="#c9c9c3" opacity="0.62"/>
<rect x="13.3" y="16" width="0.9" height="1.4" fill="#c2265a" opacity="0.62"/>
<rect x="15.1" y="16" width="0.9" height="1.4" fill="#c9c9c3" opacity="0.62"/>
<rect x="3.6" y="18" width="4.5" height="1.4" fill="#b5ad5f" opacity="0.62"/>
<rect x="3.6" y="20" width="8.9" height="1.4" fill="#b5ad5f" opacity="0.62"/>
<rect x="3.6" y="22" width="8.0" height="1.4" fill="#b5ad5f" opacity="0.62"/>
<rect x="3.6" y="24" width="8.0" height="1.4" fill="#b5ad5f" opacity="0.62"/>
<rect x="3.6" y="26" width="12.5" height="1.4" fill="#b5ad5f" opacity="0.62"/>
<rect x="3.6" y="28" width="14.2" height="1.4" fill="#b5ad5f" opacity="0.62"/>
<rect x="3.6" y="30" width="8.9" height="1.4" fill="#b5ad5f" opacity="0.62"/>
<rect x="3.6" y="32" width="14.2" height="1.4" fill="#b5ad5f" opacity="0.62"/>
<rect x="3.6" y="34" width="6.2" height="1.4" fill="#b5ad5f" opacity="0.62"/>
<rect x="3.6" y="36" width="7.1" height="1.4" fill="#b5ad5f" opacity="0.62"/>
<rect x="3.6" y="38" width="8.9" height="1.4" fill="#b5ad5f" opacity="0.62"/>
<rect x="3.6" y="40" width="8.0" height="1.4" fill="#b5ad5f" opacity="0.62"/>
<rect x="3.6" y="42" width="14.2" height="1.4" fill="#b5ad5f" opacity="0.62"/>
<rect x="3.6" y="44" width="7.1" height="1.4" fill="#b5ad5f" opacity="0.62"/>
<rect x="3.6" y="46" width="6.2" height="1.4" fill="#b5ad5f" opacity="0.62"/>
<rect x="0.0" y="48" width="0.9" height="1.4" fill="#c9c9c3" opacity="0.62"/>
<rect x="0.0" y="52" width="14.2" height="1.4" fill="#c9c9c3" opacity="0.62"/>
<rect x="15.1" y="52" width="0.9" height="1.4" fill="#c2265a" opacity="0.62"/>
<rect x="16.9" y="52" width="0.9" height="1.4" fill="#c9c9c3" opacity="0.62"/>
<rect x="3.6" y="54" width="5.3" height="1.4" fill="#b5ad5f" opacity="0.62"/>
<rect x="3.6" y="56" width="8.0" height="1.4" fill="#b5ad5f" opacity="0.62"/>
<rect x="3.6" y="58" width="7.1" height="1.4" fill="#b5ad5f" opacity="0.62"/>
<rect x="3.6" y="60" width="7.1" height="1.4" fill="#b5ad5f" opacity="0.62"/>
<rect x="3.6" y="62" width="7.1" height="1.4" fill="#b5ad5f" opacity="0.62"/>
<rect x="3.6" y="64" width="8.9" height="1.4" fill="#b5ad5f" opacity="0.62"/>
<rect x="3.6" y="66" width="8.0" height="1.4" fill="#b5ad5f" opacity="0.62"/>
<rect x="3.6" y="68" width="7.1" height="1.4" fill="#b5ad5f" opacity="0.62"/>
<rect x="3.6" y="70" width="8.9" height="1.4" fill="#b5ad5f" opacity="0.62"/>
<rect x="3.6" y="72" width="7.1" height="1.4" fill="#b5ad5f" opacity="0.62"/>
<rect x="3.6" y="74" width="8.0" height="1.4" fill="#b5ad5f" opacity="0.62"/>
<rect x="3.6" y="76" width="8.0" height="1.4" fill="#b5ad5f" opacity="0.62"/>
<rect x="0.0" y="78" width="0.9" height="1.4" fill="#c9c9c3" opacity="0.62"/>
<rect x="0.0" y="82" width="14.2" height="1.4" fill="#c9c9c3" opacity="0.62"/>
<rect x="15.1" y="82" width="0.9" height="1.4" fill="#c2265a" opacity="0.62"/>
<rect x="16.9" y="82" width="0.9" height="1.4" fill="#c9c9c3" opacity="0.62"/>
<rect x="3.6" y="84" width="6.2" height="1.4" fill="#b5ad5f" opacity="0.62"/>
<rect x="3.6" y="86" width="16.0" height="1.4" fill="#b5ad5f" opacity="0.62"/>
<rect x="3.6" y="88" width="16.9" height="1.4" fill="#b5ad5f" opacity="0.62"/>
<rect x="3.6" y="90" width="18.7" height="1.4" fill="#b5ad5f" opacity="0.62"/>
<rect x="3.6" y="92" width="10.7" height="1.4" fill="#b5ad5f" opacity="0.62"/>
<rect x="3.6" y="94" width="14.2" height="1.4" fill="#b5ad5f" opacity="0.62"/>
<rect x="3.6" y="96" width="12.5" height="1.4" fill="#b5ad5f" opacity="0.62"/>
<rect x="3.6" y="98" width="16.0" height="1.4" fill="#b5ad5f" opacity="0.62"/>
<rect x="3.6" y="100" width="7.1" height="1.4" fill="#b5ad5f" opacity="0.62"/>
<rect x="3.6" y="102" width="8.0" height="1.4" fill="#b5ad5f" opacity="0.62"/>
<rect x="3.6" y="104" width="9.8" height="1.4" fill="#b5ad5f" opacity="0.62"/>
<rect x="0.0" y="106" width="0.9" height="1.4" fill="#c9c9c3" opacity="0.62"/>
<rect x="0.0" y="110" width="17.8" height="1.4" fill="#c9c9c3" opacity="0.62"/>
<rect x="18.7" y="110" width="0.9" height="1.4" fill="#c2265a" opacity="0.62"/>
<rect x="20.5" y="110" width="0.9" height="1.4" fill="#c9c9c3" opacity="0.62"/>
<rect x="3.6" y="112" width="19.6" height="1.4" fill="#b5ad5f" opacity="0.62"/>
<rect x="3.6" y="114" width="13.3" height="1.4" fill="#b5ad5f" opacity="0.62"/>
<rect x="3.6" y="116" width="16.0" height="1.4" fill="#b5ad5f" opacity="0.62"/>
<rect x="3.6" y="118" width="18.7" height="1.4" fill="#b5ad5f" opacity="0.62"/>
<rect x="3.6" y="120" width="18.7" height="1.4" fill="#b5ad5f" opacity="0.62"/>
<rect x="3.6" y="122" width="5.3" height="1.4" fill="#b5ad5f" opacity="0.62"/>
<rect x="3.6" y="124" width="6.2" height="1.4" fill="#b5ad5f" opacity="0.62"/>
<rect x="3.6" y="126" width="5.3" height="1.4" fill="#b5ad5f" opacity="0.62"/>
<rect x="3.6" y="128" width="11.6" height="1.4" fill="#b5ad5f" opacity="0.62"/>
<rect x="3.6" y="130" width="10.7" height="1.4" fill="#b5ad5f" opacity="0.62"/>
<rect x="3.6" y="132" width="4.5" height="1.4" fill="#b5ad5f" opacity="0.62"/>
<rect x="3.6" y="134" width="8.0" height="1.4" fill="#b5ad5f" opacity="0.62"/>
<rect x="3.6" y="136" width="13.3" height="1.4" fill="#b5ad5f" opacity="0.62"/>
<rect x="3.6" y="138" width="5.3" height="1.4" fill="#b5ad5f" opacity="0.62"/>
<rect x="3.6" y="140" width="3.6" height="1.4" fill="#b5ad5f" opacity="0.62"/>
<rect x="3.6" y="142" width="4.5" height="1.4" fill="#b5ad5f" opacity="0.62"/>
<rect x="3.6" y="144" width="3.6" height="1.4" fill="#b5ad5f" opacity="0.62"/>
<rect x="3.6" y="146" width="2.7" height="1.4" fill="#b5ad5f" opacity="0.62"/>
<rect x="3.6" y="148" width="8.0" height="1.4" fill="#b5ad5f" opacity="0.62"/>
<rect x="0.0" y="150" width="0.9" height="1.4" fill="#c9c9c3" opacity="0.62"/>
<rect x="0.0" y="154" width="12.5" height="1.4" fill="#c9c9c3" opacity="0.62"/>
<rect x="13.3" y="154" width="0.9" height="1.4" fill="#c2265a" opacity="0.62"/>
<rect x="15.1" y="154" width="0.9" height="1.4" fill="#c9c9c3" opacity="0.62"/>
<rect x="3.6" y="156" width="4.5" height="1.4" fill="#b5ad5f" opacity="0.62"/>
<rect x="3.6" y="158" width="7.1" height="1.4" fill="#b5ad5f" opacity="0.62"/>
<rect x="0.0" y="160" width="0.9" height="1.4" fill="#c9c9c3" opacity="0.62"/>
<rect x="0.0" y="164" width="12.5" height="1.4" fill="#c9c9c3" opacity="0.62"/>
<rect x="13.3" y="164" width="0.9" height="1.4" fill="#c2265a" opacity="0.62"/>
<rect x="15.1" y="164" width="0.9" height="1.4" fill="#c9c9c3" opacity="0.62"/>
<rect x="3.6" y="166" width="6.2" height="1.4" fill="#b5ad5f" opacity="0.62"/>
<rect x="3.6" y="168" width="7.1" height="1.4" fill="#b5ad5f" opacity="0.62"/>
<rect x="3.6" y="170" width="8.0" height="1.4" fill="#b5ad5f" opacity="0.62"/>
<rect x="3.6" y="172" width="7.1" height="1.4" fill="#b5ad5f" opacity="0.62"/>
<rect x="3.6" y="174" width="8.9" height="1.4" fill="#b5ad5f" opacity="0.62"/>
<rect x="3.6" y="176" width="9.8" height="1.4" fill="#b5ad5f" opacity="0.62"/>
<rect x="0.0" y="178" width="0.9" height="1.4" fill="#c9c9c3" opacity="0.62"/>
<rect x="0.0" y="182" width="13.3" height="1.4" fill="#c9c9c3" opacity="0.62"/>
<rect x="14.2" y="182" width="0.9" height="1.4" fill="#c2265a" opacity="0.62"/>
<rect x="16.0" y="182" width="0.9" height="1.4" fill="#c9c9c3" opacity="0.62"/>
<rect x="3.6" y="184" width="8.0" height="1.4" fill="#b5ad5f" opacity="0.62"/>
<rect x="3.6" y="186" width="6.2" height="1.4" fill="#b5ad5f" opacity="0.62"/>
<rect x="0.0" y="188" width="0.9" height="1.4" fill="#c9c9c3" opacity="0.62"/>
<rect x="0.0" y="192" width="13.3" height="1.4" fill="#c9c9c3" opacity="0.62"/>
<rect x="14.2" y="192" width="0.9" height="1.4" fill="#c2265a" opacity="0.62"/>
<rect x="16.0" y="192" width="0.9" height="1.4" fill="#c9c9c3" opacity="0.62"/>
<rect x="3.6" y="194" width="6.2" height="1.4" fill="#b5ad5f" opacity="0.62"/>
<rect x="3.6" y="196" width="9.8" height="1.4" fill="#b5ad5f" opacity="0.62"/>
<rect x="0.0" y="198" width="0.9" height="1.4" fill="#c9c9c3" opacity="0.62"/>
<rect x="0.0" y="202" width="9.8" height="1.4" fill="#c9c9c3" opacity="0.62"/>
<rect x="10.7" y="202" width="0.9" height="1.4" fill="#c2265a" opacity="0.62"/>
<rect x="12.5" y="202" width="0.9" height="1.4" fill="#c9c9c3" opacity="0.62"/>
<rect x="3.6" y="204" width="4.5" height="1.4" fill="#b5ad5f" opacity="0.62"/>
<rect x="3.6" y="206" width="5.3" height="1.4" fill="#b5ad5f" opacity="0.62"/>
<rect x="3.6" y="208" width="5.3" height="1.4" fill="#b5ad5f" opacity="0.62"/>
<rect x="3.6" y="210" width="6.2" height="1.4" fill="#b5ad5f" opacity="0.62"/>
<rect x="3.6" y="212" width="13.3" height="1.4" fill="#b5ad5f" opacity="0.62"/>
<rect x="3.6" y="214" width="15.1" height="1.4" fill="#b5ad5f" opacity="0.62"/>
<rect x="3.6" y="216" width="8.0" height="1.4" fill="#b5ad5f" opacity="0.62"/>
<rect x="3.6" y="218" width="5.3" height="1.4" fill="#b5ad5f" opacity="0.62"/>
<rect x="0.0" y="220" width="0.9" height="1.4" fill="#c9c9c3" opacity="0.62"/>
<rect x="0.0" y="224" width="10.7" height="1.4" fill="#c9c9c3" opacity="0.62"/>
<rect x="11.6" y="224" width="0.9" height="1.4" fill="#c2265a" opacity="0.62"/>
<rect x="13.3" y="224" width="0.9" height="1.4" fill="#c9c9c3" opacity="0.62"/>
<rect x="3.6" y="226" width="5.3" height="1.4" fill="#b5ad5f" opacity="0.62"/>
<rect x="3.6" y="228" width="4.5" height="1.4" fill="#b5ad5f" opacity="0.62"/>
<rect x="3.6" y="230" width="6.2" height="1.4" fill="#b5ad5f" opacity="0.62"/>
<rect x="3.6" y="232" width="3.6" height="1.4" fill="#b5ad5f" opacity="0.62"/>
<rect x="0.0" y="234" width="0.9" height="1.4" fill="#c9c9c3" opacity="0.62"/>
<rect x="0.0" y="240" width="11.6" height="1.4" fill="#c9c9c3" opacity="0.62"/>
<rect x="12.5" y="240" width="0.9" height="1.4" fill="#c2265a" opacity="0.62"/>
<rect x="14.2" y="240" width="0.9" height="1.4" fill="#c9c9c3" opacity="0.62"/>
<rect x="3.6" y="242" width="6.2" height="1.4" fill="#b5ad5f" opacity="0.62"/>
<rect x="3.6" y="244" width="5.3" height="1.4" fill="#b5ad5f" opacity="0.62"/>
<rect x="3.6" y="246" width="5.3" height="1.4" fill="#b5ad5f" opacity="0.62"/>
<rect x="3.6" y="248" width="7.1" height="1.4" fill="#b5ad5f" opacity="0.62"/>
<rect x="3.6" y="250" width="9.8" height="1.4" fill="#b5ad5f" opacity="0.62"/>
<rect x="3.6" y="252" width="8.9" height="1.4" fill="#b5ad5f" opacity="0.62"/>
<rect x="3.6" y="254" width="8.0" height="1.4" fill="#b5ad5f" opacity="0.62"/>
<rect x="0.0" y="256" width="0.9" height="1.4" fill="#c9c9c3" opacity="0.62"/>
<rect x="0.0" y="260" width="14.2" height="1.4" fill="#c9c9c3" opacity="0.62"/>
<rect x="15.1" y="260" width="0.9" height="1.4" fill="#c2265a" opacity="0.62"/>
<rect x="16.9" y="260" width="0.9" height="1.4" fill="#c9c9c3" opacity="0.62"/>
<rect x="3.6" y="262" width="5.3" height="1.4" fill="#b5ad5f" opacity="0.62"/>
<rect x="3.6" y="264" width="8.0" height="1.4" fill="#b5ad5f" opacity="0.62"/>
<rect x="3.6" y="266" width="7.1" height="1.4" fill="#b5ad5f" opacity="0.62"/>
<rect x="0.0" y="268" width="0.9" height="1.4" fill="#c9c9c3" opacity="0.62"/>
<rect x="0.0" y="274" width="11.6" height="1.4" fill="#c9c9c3" opacity="0.62"/>
<rect x="12.5" y="274" width="0.9" height="1.4" fill="#c2265a" opacity="0.62"/>
<rect x="14.2" y="274" width="0.9" height="1.4" fill="#c9c9c3" opacity="0.62"/>
<rect x="3.6" y="276" width="5.3" height="1.4" fill="#b5ad5f" opacity="0.62"/>
<rect x="3.6" y="278" width="8.0" height="1.4" fill="#b5ad5f" opacity="0.62"/>
<rect x="3.6" y="280" width="19.6" height="1.4" fill="#b5ad5f" opacity="0.62"/>
<rect x="3.6" y="282" width="10.7" height="1.4" fill="#b5ad5f" opacity="0.62"/>
<rect x="3.6" y="284" width="18.7" height="1.4" fill="#b5ad5f" opacity="0.62"/>
<rect x="3.6" y="286" width="8.0" height="1.4" fill="#b5ad5f" opacity="0.62"/>
<rect x="3.6" y="288" width="11.6" height="1.4" fill="#b5ad5f" opacity="0.62"/>
<rect x="0.0" y="290" width="0.9" height="1.4" fill="#c9c9c3" opacity="0.62"/>
<rect x="0.0" y="294" width="14.2" height="1.4" fill="#c9c9c3" opacity="0.62"/>
<rect x="15.1" y="294" width="0.9" height="1.4" fill="#c2265a" opacity="0.62"/>
<rect x="16.9" y="294" width="0.9" height="1.4" fill="#c9c9c3" opacity="0.62"/>
<rect x="3.6" y="296" width="22.2" height="1.4" fill="#b5ad5f" opacity="0.62"/>
<rect x="3.6" y="298" width="7.1" height="1.4" fill="#b5ad5f" opacity="0.62"/>
<rect x="3.6" y="300" width="8.9" height="1.4" fill="#b5ad5f" opacity="0.62"/>
<rect x="3.6" y="302" width="9.8" height="1.4" fill="#b5ad5f" opacity="0.62"/>
<rect x="0.0" y="304" width="0.9" height="1.4" fill="#c9c9c3" opacity="0.62"/>
<rect x="0.0" y="310" width="64.1" height="1.4" fill="#6b6c66" opacity="0.62"/>
<rect x="0.0" y="312" width="12.5" height="1.4" fill="#c9c9c3" opacity="0.62"/>
<rect x="13.3" y="312" width="0.9" height="1.4" fill="#c2265a" opacity="0.62"/>
<rect x="15.1" y="312" width="16.0" height="1.4" fill="#b5ad5f" opacity="0.62"/>
<rect x="0.0" y="314" width="35.6" height="1.4" fill="#6b6c66" opacity="0.62"/>
<rect x="0.0" y="322" width="24.0" height="1.4" fill="#6b6c66" opacity="0.62"/>
<rect x="0.0" y="324" width="17.8" height="1.4" fill="#6b6c66" opacity="0.62"/>
<rect x="18.7" y="324" width="19.6" height="1.4" fill="#6b6c66" opacity="0.62"/>
<rect x="18.7" y="326" width="44.5" height="1.4" fill="#6b6c66" opacity="0.62"/>
<rect x="18.7" y="328" width="23.1" height="1.4" fill="#6b6c66" opacity="0.62"/>
<rect x="0.0" y="334" width="33.8" height="1.4" fill="#6b6c66" opacity="0.62"/>
<rect x="0.0" y="336" width="10.7" height="1.4" fill="#c9c9c3" opacity="0.62"/>
<rect x="11.6" y="336" width="0.9" height="1.4" fill="#c2265a" opacity="0.62"/>
<rect x="13.3" y="336" width="11.6" height="1.4" fill="#c9c9c3" opacity="0.62"/>
<rect x="24.9" y="336" width="12.5" height="1.4" fill="#b5ad5f" opacity="0.62"/>
<rect x="37.4" y="336" width="0.9" height="1.4" fill="#c9c9c3" opacity="0.62"/>
<rect x="3.6" y="338" width="8.0" height="1.4" fill="#c9c9c3" opacity="0.62"/>
<rect x="11.6" y="338" width="16.0" height="1.4" fill="#b5ad5f" opacity="0.62"/>
<rect x="27.6" y="338" width="0.9" height="1.4" fill="#c9c9c3" opacity="0.62"/>
<rect x="3.6" y="340" width="8.9" height="1.4" fill="#c9c9c3" opacity="0.62"/>
<rect x="12.5" y="340" width="16.9" height="1.4" fill="#b5ad5f" opacity="0.62"/>
<rect x="29.4" y="340" width="0.9" height="1.4" fill="#c9c9c3" opacity="0.62"/>
<rect x="3.6" y="342" width="7.1" height="1.4" fill="#c9c9c3" opacity="0.62"/>
<rect x="0.0" y="346" width="10.7" height="1.4" fill="#c9c9c3" opacity="0.62"/>
<rect x="11.6" y="346" width="0.9" height="1.4" fill="#c2265a" opacity="0.62"/>
<rect x="13.3" y="346" width="11.6" height="1.4" fill="#c9c9c3" opacity="0.62"/>
<rect x="24.9" y="346" width="12.5" height="1.4" fill="#b5ad5f" opacity="0.62"/>
<rect x="37.4" y="346" width="0.9" height="1.4" fill="#c9c9c3" opacity="0.62"/>
<rect x="3.6" y="348" width="8.0" height="1.4" fill="#c9c9c3" opacity="0.62"/>
<rect x="11.6" y="348" width="16.0" height="1.4" fill="#b5ad5f" opacity="0.62"/>
<rect x="27.6" y="348" width="0.9" height="1.4" fill="#c9c9c3" opacity="0.62"/>
<rect x="3.6" y="350" width="8.9" height="1.4" fill="#c9c9c3" opacity="0.62"/>
<rect x="12.5" y="350" width="16.9" height="1.4" fill="#b5ad5f" opacity="0.62"/>
<rect x="29.4" y="350" width="0.9" height="1.4" fill="#c9c9c3" opacity="0.62"/>
<rect x="3.6" y="352" width="7.1" height="1.4" fill="#c9c9c3" opacity="0.62"/>
<rect x="0.0" y="356" width="15.1" height="1.4" fill="#c9c9c3" opacity="0.62"/>
<rect x="16.0" y="356" width="0.9" height="1.4" fill="#c2265a" opacity="0.62"/>
<rect x="17.8" y="356" width="11.6" height="1.4" fill="#c9c9c3" opacity="0.62"/>
<rect x="29.4" y="356" width="10.7" height="1.4" fill="#b5ad5f" opacity="0.62"/>
<rect x="40.0" y="356" width="0.9" height="1.4" fill="#c9c9c3" opacity="0.62"/>
<rect x="3.6" y="358" width="8.0" height="1.4" fill="#c9c9c3" opacity="0.62"/>
<rect x="11.6" y="358" width="14.2" height="1.4" fill="#b5ad5f" opacity="0.62"/>
<rect x="25.8" y="358" width="0.9" height="1.4" fill="#c9c9c3" opacity="0.62"/>
<rect x="3.6" y="360" width="7.1" height="1.4" fill="#c9c9c3" opacity="0.62"/>
<rect x="0.0" y="364" width="16.9" height="1.4" fill="#c9c9c3" opacity="0.62"/>
<rect x="17.8" y="364" width="0.9" height="1.4" fill="#c2265a" opacity="0.62"/>
<rect x="19.6" y="364" width="11.6" height="1.4" fill="#c9c9c3" opacity="0.62"/>
<rect x="31.2" y="364" width="16.0" height="1.4" fill="#b5ad5f" opacity="0.62"/>
<rect x="47.2" y="364" width="0.9" height="1.4" fill="#c9c9c3" opacity="0.62"/>
<rect x="3.6" y="366" width="8.0" height="1.4" fill="#c9c9c3" opacity="0.62"/>
<rect x="11.6" y="366" width="19.6" height="1.4" fill="#b5ad5f" opacity="0.62"/>
<rect x="31.2" y="366" width="0.9" height="1.4" fill="#c9c9c3" opacity="0.62"/>
<rect x="3.6" y="368" width="7.1" height="1.4" fill="#c9c9c3" opacity="0.62"/>
<rect x="0.0" y="372" width="11.6" height="1.4" fill="#c9c9c3" opacity="0.62"/>
<rect x="12.5" y="372" width="0.9" height="1.4" fill="#c2265a" opacity="0.62"/>
<rect x="14.2" y="372" width="11.6" height="1.4" fill="#c9c9c3" opacity="0.62"/>
<rect x="25.8" y="372" width="14.2" height="1.4" fill="#b5ad5f" opacity="0.62"/>
<rect x="40.0" y="372" width="0.9" height="1.4" fill="#c9c9c3" opacity="0.62"/>
<rect x="3.6" y="374" width="8.0" height="1.4" fill="#c9c9c3" opacity="0.62"/>
<rect x="11.6" y="374" width="17.8" height="1.4" fill="#b5ad5f" opacity="0.62"/>
<rect x="29.4" y="374" width="0.9" height="1.4" fill="#c9c9c3" opacity="0.62"/>
<rect x="3.6" y="376" width="7.1" height="1.4" fill="#c9c9c3" opacity="0.62"/>
<rect x="0.0" y="380" width="12.5" height="1.4" fill="#c9c9c3" opacity="0.62"/>
<rect x="13.3" y="380" width="0.9" height="1.4" fill="#c2265a" opacity="0.62"/>
<rect x="15.1" y="380" width="11.6" height="1.4" fill="#c9c9c3" opacity="0.62"/>
<rect x="26.7" y="380" width="14.2" height="1.4" fill="#b5ad5f" opacity="0.62"/>
<rect x="40.9" y="380" width="0.9" height="1.4" fill="#c9c9c3" opacity="0.62"/>
<rect x="3.6" y="382" width="8.0" height="1.4" fill="#c9c9c3" opacity="0.62"/>
<rect x="11.6" y="382" width="17.8" height="1.4" fill="#b5ad5f" opacity="0.62"/>
<rect x="29.4" y="382" width="0.9" height="1.4" fill="#c9c9c3" opacity="0.62"/>
<rect x="3.6" y="384" width="7.1" height="1.4" fill="#c9c9c3" opacity="0.62"/>
<rect x="0.0" y="388" width="11.6" height="1.4" fill="#c9c9c3" opacity="0.62"/>
<rect x="12.5" y="388" width="0.9" height="1.4" fill="#c2265a" opacity="0.62"/>
<rect x="14.2" y="388" width="11.6" height="1.4" fill="#c9c9c3" opacity="0.62"/>
<rect x="25.8" y="388" width="13.3" height="1.4" fill="#b5ad5f" opacity="0.62"/>
<rect x="39.2" y="388" width="0.9" height="1.4" fill="#c9c9c3" opacity="0.62"/>
<rect x="3.6" y="390" width="8.0" height="1.4" fill="#c9c9c3" opacity="0.62"/>
<rect x="11.6" y="390" width="16.9" height="1.4" fill="#b5ad5f" opacity="0.62"/>
<rect x="28.5" y="390" width="0.9" height="1.4" fill="#c9c9c3" opacity="0.62"/>
<rect x="3.6" y="392" width="7.1" height="1.4" fill="#c9c9c3" opacity="0.62"/>
<rect x="0.0" y="396" width="8.9" height="1.4" fill="#c9c9c3" opacity="0.62"/>
<rect x="9.8" y="396" width="0.9" height="1.4" fill="#c2265a" opacity="0.62"/>
<rect x="11.6" y="396" width="11.6" height="1.4" fill="#c9c9c3" opacity="0.62"/>
<rect x="23.1" y="396" width="10.7" height="1.4" fill="#b5ad5f" opacity="0.62"/>
<rect x="33.8" y="396" width="0.9" height="1.4" fill="#c9c9c3" opacity="0.62"/>
<rect x="3.6" y="398" width="8.0" height="1.4" fill="#c9c9c3" opacity="0.62"/>
<rect x="11.6" y="398" width="14.2" height="1.4" fill="#b5ad5f" opacity="0.62"/>
<rect x="25.8" y="398" width="0.9" height="1.4" fill="#c9c9c3" opacity="0.62"/>
<rect x="3.6" y="400" width="7.1" height="1.4" fill="#c9c9c3" opacity="0.62"/>
<rect x="0.0" y="404" width="8.9" height="1.4" fill="#c9c9c3" opacity="0.62"/>
<rect x="9.8" y="404" width="0.9" height="1.4" fill="#c2265a" opacity="0.62"/>
<rect x="11.6" y="404" width="11.6" height="1.4" fill="#c9c9c3" opacity="0.62"/>
<rect x="23.1" y="404" width="10.7" height="1.4" fill="#b5ad5f" opacity="0.62"/>
<rect x="33.8" y="404" width="0.9" height="1.4" fill="#c9c9c3" opacity="0.62"/>
<rect x="3.6" y="406" width="8.0" height="1.4" fill="#c9c9c3" opacity="0.62"/>
<rect x="11.6" y="406" width="14.2" height="1.4" fill="#b5ad5f" opacity="0.62"/>
<rect x="25.8" y="406" width="0.9" height="1.4" fill="#c9c9c3" opacity="0.62"/>
<rect x="3.6" y="408" width="7.1" height="1.4" fill="#c9c9c3" opacity="0.62"/>
<rect x="0.0" y="412" width="12.5" height="1.4" fill="#c9c9c3" opacity="0.62"/>
<rect x="13.3" y="412" width="0.9" height="1.4" fill="#c2265a" opacity="0.62"/>
<rect x="15.1" y="412" width="11.6" height="1.4" fill="#c9c9c3" opacity="0.62"/>
<rect x="26.7" y="412" width="14.2" height="1.4" fill="#b5ad5f" opacity="0.62"/>
<rect x="40.9" y="412" width="0.9" height="1.4" fill="#c9c9c3" opacity="0.62"/>
<rect x="3.6" y="414" width="8.0" height="1.4" fill="#c9c9c3" opacity="0.62"/>
<rect x="11.6" y="414" width="17.8" height="1.4" fill="#b5ad5f" opacity="0.62"/>
<rect x="29.4" y="414" width="0.9" height="1.4" fill="#c9c9c3" opacity="0.62"/>
<rect x="3.6" y="416" width="7.1" height="1.4" fill="#c9c9c3" opacity="0.62"/>
<rect x="0.0" y="420" width="10.7" height="1.4" fill="#c9c9c3" opacity="0.62"/>
<rect x="11.6" y="420" width="0.9" height="1.4" fill="#c2265a" opacity="0.62"/>
<rect x="13.3" y="420" width="11.6" height="1.4" fill="#c9c9c3" opacity="0.62"/>
<rect x="24.9" y="420" width="13.3" height="1.4" fill="#b5ad5f" opacity="0.62"/>
<rect x="38.3" y="420" width="0.9" height="1.4" fill="#c9c9c3" opacity="0.62"/>
<rect x="3.6" y="422" width="8.0" height="1.4" fill="#c9c9c3" opacity="0.62"/>
<rect x="11.6" y="422" width="16.9" height="1.4" fill="#b5ad5f" opacity="0.62"/>
<rect x="28.5" y="422" width="0.9" height="1.4" fill="#c9c9c3" opacity="0.62"/>
<rect x="3.6" y="424" width="7.1" height="1.4" fill="#c9c9c3" opacity="0.62"/>
<rect x="0.0" y="428" width="24.0" height="1.4" fill="#6b6c66" opacity="0.62"/>
<rect x="0.0" y="430" width="6.2" height="1.4" fill="#c9c9c3" opacity="0.62"/>
<rect x="7.1" y="430" width="0.9" height="1.4" fill="#c2265a" opacity="0.62"/>
<rect x="8.9" y="430" width="0.9" height="1.4" fill="#c9c9c3" opacity="0.62"/>
<rect x="3.6" y="432" width="8.9" height="1.4" fill="#b5ad5f" opacity="0.62"/>
<rect x="13.3" y="432" width="10.7" height="1.4" fill="#c9c9c3" opacity="0.62"/>
<rect x="3.6" y="434" width="8.0" height="1.4" fill="#b5ad5f" opacity="0.62"/>
<rect x="12.5" y="434" width="12.5" height="1.4" fill="#c9c9c3" opacity="0.62"/>
<rect x="3.6" y="436" width="11.6" height="1.4" fill="#b5ad5f" opacity="0.62"/>
<rect x="16.0" y="436" width="13.3" height="1.4" fill="#c9c9c3" opacity="0.62"/>
<rect x="3.6" y="438" width="11.6" height="1.4" fill="#b5ad5f" opacity="0.62"/>
<rect x="16.0" y="438" width="13.3" height="1.4" fill="#c9c9c3" opacity="0.62"/>
<rect x="3.6" y="440" width="10.7" height="1.4" fill="#b5ad5f" opacity="0.62"/>
<rect x="15.1" y="440" width="16.0" height="1.4" fill="#c9c9c3" opacity="0.62"/>
<rect x="3.6" y="442" width="11.6" height="1.4" fill="#b5ad5f" opacity="0.62"/>
<rect x="16.0" y="442" width="15.1" height="1.4" fill="#c9c9c3" opacity="0.62"/>
<rect x="3.6" y="444" width="16.9" height="1.4" fill="#b5ad5f" opacity="0.62"/>
<rect x="21.4" y="444" width="17.8" height="1.4" fill="#c9c9c3" opacity="0.62"/>
<rect x="3.6" y="446" width="10.7" height="1.4" fill="#b5ad5f" opacity="0.62"/>
<rect x="15.1" y="446" width="10.7" height="1.4" fill="#c9c9c3" opacity="0.62"/>
<rect x="3.6" y="448" width="8.0" height="1.4" fill="#b5ad5f" opacity="0.62"/>
<rect x="12.5" y="448" width="9.8" height="1.4" fill="#c9c9c3" opacity="0.62"/>
<rect x="3.6" y="450" width="8.0" height="1.4" fill="#b5ad5f" opacity="0.62"/>
<rect x="12.5" y="450" width="8.9" height="1.4" fill="#c9c9c3" opacity="0.62"/>
<rect x="3.6" y="452" width="11.6" height="1.4" fill="#b5ad5f" opacity="0.62"/>
<rect x="16.0" y="452" width="14.2" height="1.4" fill="#c9c9c3" opacity="0.62"/>
<rect x="3.6" y="454" width="11.6" height="1.4" fill="#b5ad5f" opacity="0.62"/>
<rect x="16.0" y="454" width="12.5" height="1.4" fill="#c9c9c3" opacity="0.62"/>
<rect x="0.0" y="456" width="0.9" height="1.4" fill="#c9c9c3" opacity="0.62"/>
<rect x="0.0" y="460" width="33.8" height="1.4" fill="#6b6c66" opacity="0.62"/>
<rect x="0.0" y="462" width="32.0" height="1.4" fill="#6b6c66" opacity="0.62"/>
<rect x="32.9" y="462" width="24.9" height="1.4" fill="#6b6c66" opacity="0.62"/>
<rect x="0.0" y="464" width="33.8" height="1.4" fill="#6b6c66" opacity="0.62"/>
<rect x="0.0" y="466" width="16.0" height="1.4" fill="#c9c9c3" opacity="0.62"/>
<rect x="16.9" y="466" width="0.9" height="1.4" fill="#c2265a" opacity="0.62"/>
<rect x="18.7" y="466" width="14.2" height="1.4" fill="#c9c9c3" opacity="0.62"/>
<rect x="0.0" y="470" width="10.7" height="1.4" fill="#c9c9c3" opacity="0.62"/>
<rect x="11.6" y="470" width="0.9" height="1.4" fill="#c2265a" opacity="0.62"/>
<rect x="13.3" y="470" width="9.8" height="1.4" fill="#c9c9c3" opacity="0.62"/>
<rect x="24.0" y="470" width="10.7" height="1.4" fill="#c9c9c3" opacity="0.62"/>
<rect x="35.6" y="470" width="12.5" height="1.4" fill="#c9c9c3" opacity="0.62"/>
<rect x="49.0" y="470" width="12.5" height="1.4" fill="#c9c9c3" opacity="0.62"/>
<rect x="62.3" y="470" width="10.7" height="1.4" fill="#c9c9c3" opacity="0.62"/>
<rect x="73.9" y="470" width="16.0" height="1.4" fill="#c9c9c3" opacity="0.62"/>
<rect x="90.8" y="470" width="12.5" height="1.4" fill="#c9c9c3" opacity="0.62"/>
<rect x="104.1" y="470" width="8.9" height="1.4" fill="#c9c9c3" opacity="0.62"/>
<rect x="113.9" y="470" width="7.1" height="1.4" fill="#c9c9c3" opacity="0.62"/>
</svg>
</div>
<div id="vtrack2"><div class="thumb" style="left:8px;top:107px;width:16px;height:134px;background:linear-gradient(90deg,#535353,#414141)"></div></div>
<div class="hbar" style="left:0;width:439px"><div class="thumb" style="left:8px;top:8.2px;width:366.5px;height:16px;background:linear-gradient(#4e4e4e,#3e3e3e)"></div></div>
<div class="hbar" style="left:473px;width:2087px"><div class="thumb" style="left:8px;top:8.2px;width:1583px;height:16px;background:linear-gradient(#4e4e4e,#3e3e3e)"></div></div>
<div id="status">
<svg class="abs" style="left:19px;top:11px" width="26" height="22" viewBox="0 0 26 22" fill="none" stroke="#9e9e9e" stroke-width="2"><rect x="2" y="2" width="22" height="18"/><path d="M2,14.5 H24"/></svg>
<div class="t" style="left:62px">Line 1, Column 1</div>
<div class="vs" style="left:2172px"></div><div class="t" style="left:2217px;transform:scaleX(0.919)">Spaces: 4</div>
<div class="vs" style="left:2361.5px"></div><div class="t" style="left:2418.5px;transform:scaleX(0.975)">Python</div>
</div>
</div></body></html>
